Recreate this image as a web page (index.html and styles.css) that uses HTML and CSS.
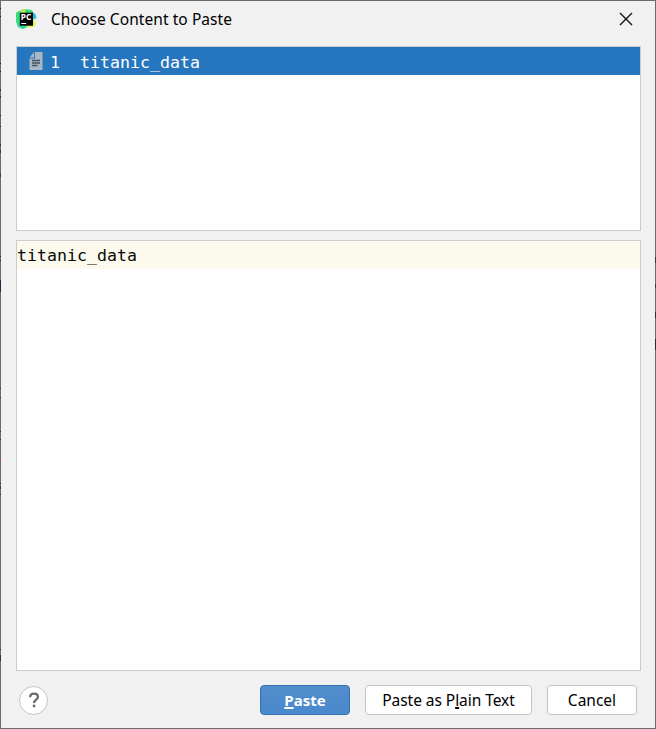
FILE: index.html
```
<!DOCTYPE html>
<html lang="en">
<head>
<meta charset="utf-8">
<title>Choose Content to Paste</title>
<link rel="stylesheet" href="styles.css">
</head>
<body>
<main class="dialog">
  <header class="titlebar">
    <svg class="logo" width="22" height="22" viewBox="0 0 22 22">
      <defs>
        <linearGradient id="g" x1="0" y1="0" x2="1" y2="1"><stop offset="0" stop-color="#2bd98c"/><stop offset=".5" stop-color="#9fea5a"/><stop offset="1" stop-color="#35dd80"/></linearGradient>
      </defs>
      <path d="M0 5 7 1 17 3 17.5 18 11 19 7 21 2 19 0 13Z" fill="url(#g)"/>
      <path d="M0 5 3 3 5 14 2 19 0 13Z" fill="#35dc7c"/>
      <path d="M2 15 5 12 6 17 11 19 7 21 2 19Z" fill="#2ed4a0"/>
      <path d="M6 1.3 10 1.5 9 5H4Z" fill="#b9ee55"/>
      <path d="M10 1.3 16 2 17 5H9Z" fill="#35dc7c"/>
      <path d="M16 4 19.5 6 20.500 10 17 12Z" fill="#12c5e5"/>
      <path d="M17 10 20 16 17 19.500 11 19 12 17Z" fill="#eef05a"/>
      <rect x="3.8" y="4.7" width="13.2" height="13" fill="#000"/>
      <text class="logo-text" x="4.800" y="11.800" textLength="10.500" lengthAdjust="spacingAndGlyphs">PC</text>
      <path d="M5.200 15.500h5" stroke="#fff" stroke-width="1"/>
    </svg>
    <h1 class="title">Choose Content to Paste</h1>
    <svg class="close" width="14" height="14" viewBox="0 0 14 14"><path d="M1 1 13 13M13 1 1 13" stroke="#111" stroke-width="1.4"/></svg>
  </header>
  <section class="list">
    <div class="row">
      <svg class="doc" width="14" height="18" viewBox="0 0 14 18"><path d="M6 0H13.500V18H.5V6.500H6Z" fill="#a9b7c2"/><path d="M5 0V5.500H.5Z" fill="#a9b7c2"/><path d="M3 8.500h8M3 11h8M3 13.500h5.500" stroke="#3f5566" stroke-width="1.300"/></svg>
      <span class="num">1</span>
      <span class="code">titanic_data</span>
    </div>
  </section>
  <section class="preview"><div class="line code">titanic_data</div></section>
  <footer class="actions">
    <button class="help" aria-label="Help"><svg width="12" height="16" viewBox="0 0 12 16"><path d="M2.100 5.200C2.100 2.800 3.700 1.600 6 1.600S9.900 2.800 9.900 4.900C9.900 7.600 6.100 7.800 6.100 11" fill="none" stroke="#6a6a6a" stroke-width="2.300"/><path d="M4.800 12.700h2.500v2.500H4.800Z" fill="#6a6a6a"/></svg></button>
    <button class="btn primary"><span><u>P</u>aste</span></button>
    <button class="btn plain"><span>Paste as P<u>l</u>ain Text</span></button>
    <button class="btn cancel"><span>Cancel</span></button>
  </footer>
</main>
</body>
</html>
```
FILE: styles.css
```
* { box-sizing: border-box; }
body { margin: 0; font-family: "Noto Sans", sans-serif; font-size: 15.5px; color: #000; }
.dialog {
  width: 656px; height: 729px; border: 1px solid #6c6a6c; border-width: 1px 0; padding: 0 15px 0 16px;
  display: flex; flex-direction: column;
  background:
    linear-gradient(#2a2840, #2a2840) 0 279px / 1px 12px no-repeat,
    linear-gradient(#23364f, #23364f) 0 88px / 1px 2px no-repeat,
    linear-gradient(#23364f, #23364f) 0 95px / 1px 2px no-repeat,
    linear-gradient(#222, #222) 0 7px / 1px 1px no-repeat,
    linear-gradient(#222, #222) 0 15px / 1px 1px no-repeat,
    linear-gradient(#222, #222) 0 62px / 1px 1px no-repeat,
    linear-gradient(#222, #222) 0 70px / 1px 1px no-repeat,
    linear-gradient(#222, #222) 0 114px / 1px 1px no-repeat,
    linear-gradient(#222, #222) 0 125px / 1px 1px no-repeat,
    linear-gradient(#23364f, #23364f) 0 143px / 1px 2px no-repeat,
    linear-gradient(#4a2d3a, #4a2d3a) 0 149px / 1px 3px no-repeat,
    linear-gradient(#5a3a22, #5a3a22) 0 172px / 1px 4px no-repeat,
    linear-gradient(#222, #222) 0 255px / 1px 1px no-repeat,
    linear-gradient(#222, #222) 0 259px / 1px 1px no-repeat,
    linear-gradient(#333, #333) 0 387px / 1px 1px no-repeat,
    linear-gradient(#333, #333) 0 396px / 1px 1px no-repeat,
    linear-gradient(#333, #333) 0 430px / 1px 1px no-repeat,
    linear-gradient(#333, #333) 0 438px / 1px 1px no-repeat,
    linear-gradient(#b0433a, #b0433a) 0 458px / 1px 2px no-repeat,
    linear-gradient(#222, #222) 0 482px / 1px 1px no-repeat,
    linear-gradient(#5a3a22, #5a3a22) 0 485px / 1px 3px no-repeat,
    linear-gradient(#222, #222) 0 493px / 1px 1px no-repeat,
    linear-gradient(#333, #333) 0 648px / 1px 1px no-repeat,
    linear-gradient(#333, #333) 0 654px / 1px 6px no-repeat,
    linear-gradient(#2d3b48, #2d3b48) 100% 256px / 1px 6px no-repeat,
    linear-gradient(#4d2d5c, #4d2d5c) 100% 283px / 1px 4px no-repeat,
    linear-gradient(#2d2d2d, #2d2d2d) 100% 311px / 1px 6px no-repeat,
    linear-gradient(#2a2840, #2a2840) 100% 338px / 1px 11px no-repeat,
    linear-gradient(#6c6a6c, #6c6a6c) 0 0 / 1px 100% no-repeat,
    linear-gradient(#6c6a6c, #6c6a6c) 100% 0 / 1px 100% no-repeat,
    #f1f1f1;
}
.titlebar { height: 45px; display: flex; align-items: flex-start; }
.logo { margin-top: 7px; }
.logo-text { font: bold 8.5px "Noto Sans", sans-serif; fill: #fff; }
.title { margin: 7px 0 0 13px; font-size: 15.5px; font-weight: 400; line-height: 23px; letter-spacing: .07px; white-space: nowrap; }
.close { margin: 11px 8px 0 auto; }
.list { height: 185px; background: #fff; border: 1px solid #ccc; }
.row { height: 28px; background: #2675bf; color: #fff; display: flex; align-items: center; padding-left: 12px; }
.code, .num { font-family: "DejaVu Sans Mono", monospace; font-size: 16.6px; line-height: 28px; white-space: pre; }
.num { margin: 3px 20px 0 7px; }
.row .code { margin-top: 3px; }
.preview { margin-top: 9px; height: 431px; background: #fff; border: 1px solid #ccc; }
.line { height: 28px; background: #fcfaed; padding-top: 1px; color: #080808; }
.actions { display: flex; align-items: center; height: 30px; margin-top: 14px; }
.help { width: 29px; height: 29px; margin: 0 auto 0 3px; padding: 0; border: 1px solid #c4c4c4; border-radius: 50%; background: #fff; display: flex; align-items: center; justify-content: center; }
.btn { height: 30px; padding: 0; border: 1px solid #c4c4c4; border-radius: 4px; background: #fff; color: #000; font: 15.5px/29px "Noto Sans", sans-serif; white-space: nowrap; }
.btn u { text-decoration-thickness: 2px; text-underline-offset: 1px; text-decoration-skip-ink: none; }
.primary { width: 90px; background: linear-gradient(#528ccb, #4989cc); border-color: #3471b3; color: #fff; font-weight: 700; font-size: 15px; }
.plain { width: 167px; margin-left: 15px; letter-spacing: -.05px; }
.cancel { width: 90px; margin: 0 4px 0 15px; }
```
